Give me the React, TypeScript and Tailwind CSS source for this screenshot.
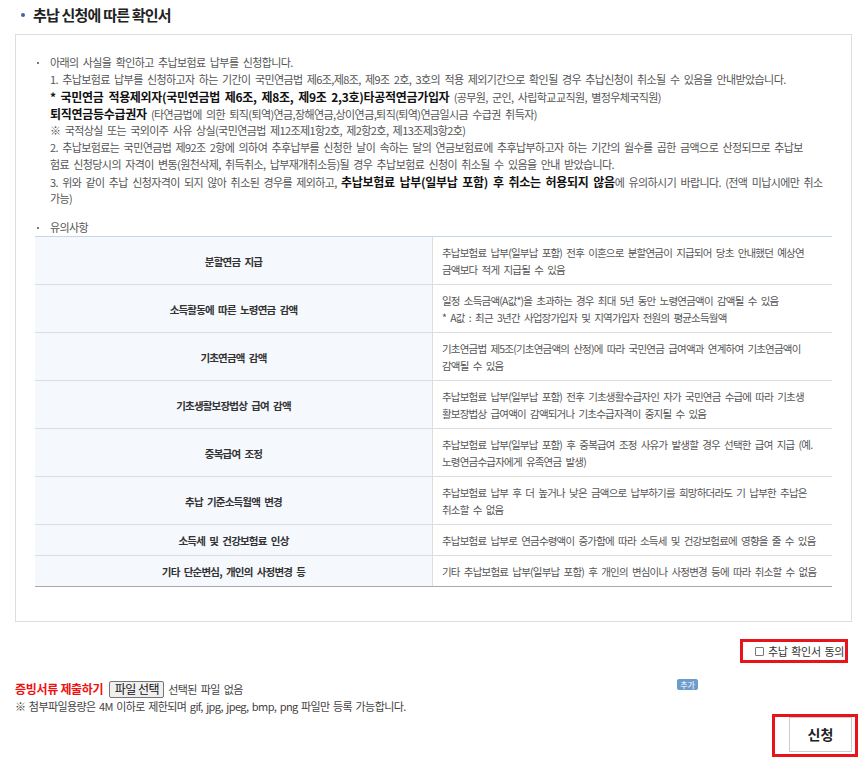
import React from "react";

const rows: [string, string[]][] = [
  ["분할연금 지급", ["추납보험료 납부(일부납 포함) 전후 이혼으로 분할연금이 지급되어 당초 안내했던 예상연", "금액보다 적게 지급될 수 있음"]],
  ["소득활동에 따른 노령연금 감액", ["일정 소득금액(A값*)을 초과하는 경우 최대 5년 동안 노령연금액이 감액될 수 있음", "* A값 : 최근 3년간 사업장가입자 및 지역가입자 전원의 평균소득월액"]],
  ["기초연금액 감액", ["기초연금법 제5조(기초연금액의 산정)에 따라 국민연금 급여액과 연계하여 기초연금액이", "감액될 수 있음"]],
  ["기초생활보장법상 급여 감액", ["추납보험료 납부(일부납 포함) 전후 기초생활수급자인 자가 국민연금 수급에 따라 기초생", "활보장법상 급여액이 감액되거나 기초수급자격이 중지될 수 있음"]],
  ["중복급여 조정", ["추납보험료 납부(일부납 포함) 후 중복급여 조정 사유가 발생할 경우 선택한 급여 지급 (예.", "노령연금수급자에게 유족연금 발생)"]],
  ["추납 기준소득월액 변경", ["추납보험료 납부 후 더 높거나 낮은 금액으로 납부하기를 희망하더라도 기 납부한 추납은", "취소할 수 없음"]],
  ["소득세 및 건강보험료 인상", ["추납보험료 납부로 연금수령액이 증가함에 따라 소득세 및 건강보험료에 영향을 줄 수 있음"]],
  ["기타 단순변심, 개인의 사정변경 등", ["기타 추납보험료 납부(일부납 포함) 후 개인의 변심이나 사정변경 등에 따라 취소할 수 없음"]],
];

function B({ children }: { children: React.ReactNode }) {
  return <b className="text-[12px] leading-[17px] text-[#111] tracking-[-0.3px]">{children}</b>;
}

function L({ children }: { children: React.ReactNode }) {
  return <div className="h-[17px] leading-[17px] whitespace-nowrap">{children}</div>;
}

export default function App() {
  return (
    <div className="w-[863px] h-[758px] bg-white font-['Noto_Sans_CJK_KR','Noto_Sans',sans-serif] text-[#555] pl-[15px] pr-[11px] overflow-hidden">
      {/* Title */}
      <div className="h-[30px] flex items-center mb-[4px]">
        <span className="ml-[6px] w-[4px] h-[4px] rounded-full bg-[#4b5ea5]" />
        <h1 className="ml-[8px] text-[15px] font-bold text-[#222] tracking-[-0.8px]">추납 신청에 따른 확인서</h1>
      </div>

      {/* Box */}
      <div className="border border-[#ddd] px-[19px] pt-[19px] pb-[34px] text-[11px] leading-[17px] tracking-[-0.6px] [word-spacing:2.4px]">
        <div className="flex">
          <div className="w-[15px] shrink-0 pt-[8px]">
            <span className="block ml-[2px] w-[2px] h-[2px] bg-[#777]" />
          </div>
          <div>
            <L>아래의 사실을 확인하고 추납보험료 납부를 신청합니다.</L>
            <L>1. 추납보험료 납부를 신청하고자 하는 기간이 국민연금법 제6조,제8조, 제9조 2호, 3호의 적용 제외기간으로 확인될 경우 추납신청이 취소될 수 있음을 안내받았습니다.</L>
            <L>
              <B>* 국민연금 적용제외자(국민연금법 제6조, 제8조, 제9조 2,3호)타공적연금가입자</B> (공무원, 군인, 사립학교교직원, 별정우체국직원)
            </L>
            <L>
              <B>퇴직연금등수급권자</B> (타연금법에 의한 퇴직(퇴역)연금,장해연금,상이연금,퇴직(퇴역)연금일시금 수급권 취득자)
            </L>
            <L>※ 국적상실 또는 국외이주 사유 상실(국민연금법 제12조제1항2호, 제2항2호, 제13조제3항2호)</L>
            <L>2. 추납보험료는 국민연금법 제92조 2항에 의하여 추후납부를 신청한 날이 속하는 달의 연금보험료에 추후납부하고자 하는 기간의 월수를 곱한 금액으로 산정되므로 추납보</L>
            <L>험료 신청당시의 자격이 변동(원천삭제, 취득취소, 납부재개취소등)될 경우 추납보험료 신청이 취소될 수 있음을 안내 받았습니다.</L>
            <L>
              3. 위와 같이 추납 신청자격이 되지 않아 취소된 경우를 제외하고, <B>추납보험료 납부(일부납 포함) 후 취소는 허용되지 않음</B>에 유의하시기 바랍니다. (전액 미납시에만 취소
            </L>
            <L>가능)</L>
          </div>
        </div>

        <div className="flex mt-[12px]">
          <div className="w-[15px] shrink-0 pt-[8px]">
            <span className="block ml-[2px] w-[2px] h-[2px] bg-[#777]" />
          </div>
          <L>유의사항</L>
        </div>

        <div className="border-t border-[#c9d3e6] border-b border-b-[#aaa] text-[10.5px] tracking-[-0.8px] [word-spacing:2.6px]">
          {rows.map(([k, v], i) => (
            <div
              key={i}
              className={`grid grid-cols-[398px_1fr] ${i < rows.length - 1 ? "border-b border-[#ddd]" : ""}`}
            >
              <div className="bg-[#f5f8fd] border-r border-[#ddd] flex items-center justify-center font-bold text-[#333] pt-[7px] pb-[6px]">
                <L>{k}</L>
              </div>
              <div className="pl-[9px] pr-[4px] pt-[7px] pb-[6px]">
                {v.map((t, j) => (
                  <L key={j}>{t}</L>
                ))}
              </div>
            </div>
          ))}
        </div>
      </div>

      {/* Agreement */}
      <div className="flex justify-end mt-[17px]">
        <div className="mr-[4px] w-[108px] h-[24px] border-[3px] border-[#e8141b] flex items-center pl-[12px] text-[11px] text-[#333] tracking-[-0.3px] [word-spacing:1.5px]">
          <span className="w-[9px] h-[9px] border border-[#777] rounded-[1px] bg-white shrink-0" />
          <span className="ml-[4px] whitespace-nowrap">추납 확인서 동의</span>
        </div>
      </div>

      {/* File row */}
      <div className="flex items-center h-[18px] mt-[17px]">
        <span className="text-[#ee1111] font-bold text-[12px] tracking-[-0.3px] whitespace-nowrap">증빙서류 제출하기</span>
        <span className="ml-[6px] w-[55px] h-[17px] border border-[#767676] bg-[#efefef] rounded-[2px] flex items-center justify-center text-[12px] text-[#111] tracking-[-0.5px] whitespace-nowrap">
          파일 선택
        </span>
        <span className="ml-[4px] text-[11px] text-[#444] tracking-[-0.7px] [word-spacing:2.4px] whitespace-nowrap">선택된 파일 없음</span>
        <span className="ml-auto mr-[154px] self-start -mt-[1px] w-[21px] h-[11px] rounded-[2px] bg-[#6b9ccb] text-white text-[8px] leading-[11px] flex items-center justify-center">
          추가
        </span>
      </div>
      <div className="text-[11px] leading-[16px] text-[#444] tracking-[-0.6px] [word-spacing:1.6px] whitespace-nowrap">
        ※ 첨부파일용량은 4M 이하로 제한되며 gif, jpg, jpeg, bmp, png 파일만 등록 가능합니다.
      </div>

      {/* Submit */}
      <div className="flex justify-end -mr-[6px]">
        <div className="border-[3px] border-[#e8141b] pl-[14px] pr-[3px] pb-[2px]">
          <button className="w-[63px] h-[35px] border border-[#ccc] bg-white text-[14px] font-bold text-[#222]">
            신청
          </button>
        </div>
      </div>
    </div>
  );
}
